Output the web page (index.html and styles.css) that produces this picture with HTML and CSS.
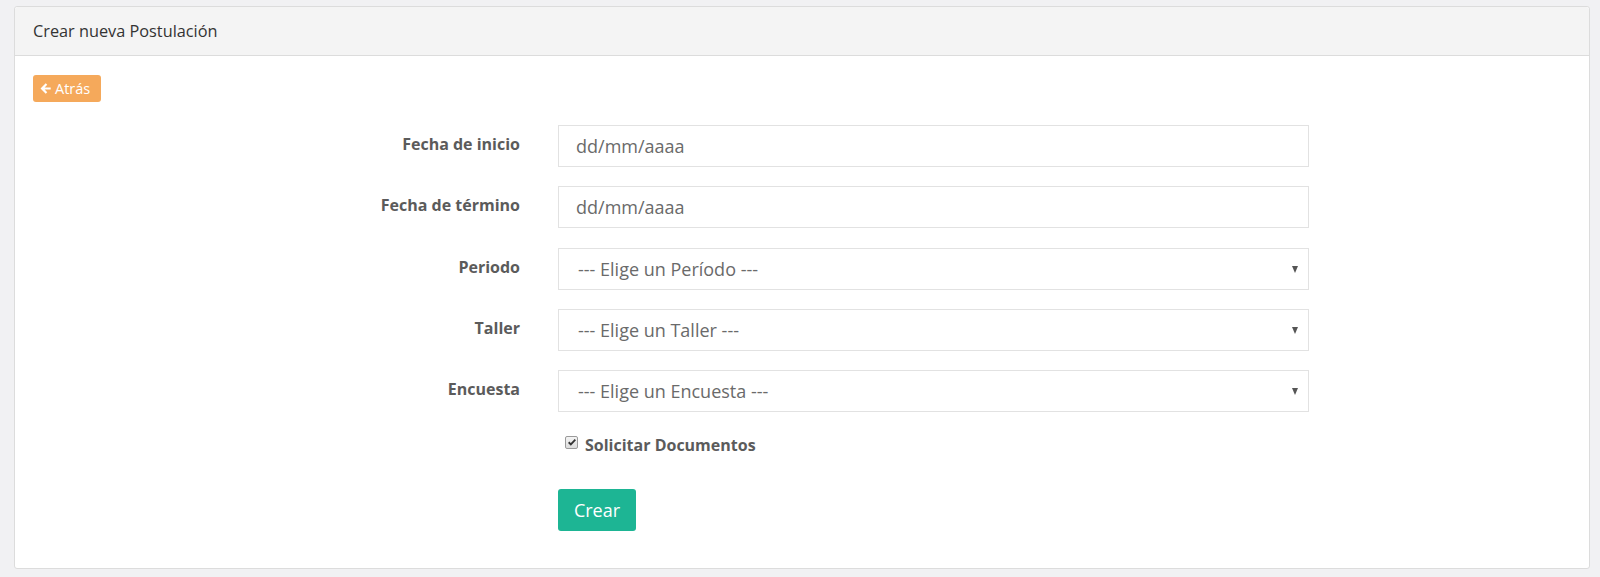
FILE: index.html
```html
<!DOCTYPE html>
<html lang="es">
<head>
<meta charset="utf-8">
<title>Crear nueva Postulación</title>
<link rel="stylesheet" href="styles.css">
</head>
<body>
<div class="panel">
  <div class="panel-heading">Crear nueva Postulación</div>
  <div class="panel-body">
    <a class="btn-back" href="#"><svg class="arrow" viewBox="0 0 12 12" width="13" height="13"><path d="M6.2 1.2 L1.4 6 L6.2 10.8 L7.6 9.4 L5.2 7 H10.8 V5 H5.2 L7.6 2.6 Z" fill="#fff"/></svg>Atrás</a>
    <form class="form">
      <label class="lbl">Fecha de inicio</label>
      <input class="control" type="text" placeholder="dd/mm/aaaa">
      <label class="lbl">Fecha de término</label>
      <input class="control" type="text" placeholder="dd/mm/aaaa">
      <label class="lbl">Periodo</label>
      <div class="select-wrap"><select class="control select"><option>--- Elige un Período ---</option></select></div>
      <label class="lbl">Taller</label>
      <div class="select-wrap"><select class="control select"><option>--- Elige un Taller ---</option></select></div>
      <label class="lbl">Encuesta</label>
      <div class="select-wrap"><select class="control select"><option>--- Elige un Encuesta ---</option></select></div>
      <label class="check">
        <span class="box"><svg viewBox="0 0 12 12" width="10" height="10"><path d="M2 6.3 L4.6 8.8 L10 3.2" fill="none" stroke="#333" stroke-width="2.2"/></svg></span>
        Solicitar Documentos
      </label>
      <div class="actions"><button class="btn-create" type="button">Crear</button></div>
    </form>
  </div>
</div>
</body>
</html>
```

FILE: styles.css
```css
* { box-sizing: border-box; }
html, body { margin: 0; padding: 0; }
body {
  background: #f1f1f3;
  font-family: "Open Sans", "Liberation Sans", sans-serif;
  color: #555;
  height: 577px;
  overflow: hidden;
}
.panel {
  margin: 6px 10px 9px 14px;
  background: #fff;
  border: 1px solid #dcdcdc;
  border-radius: 3px;
}
.panel-heading {
  height: 49px;
  line-height: 48px;
  padding: 0 18px;
  background: #f4f4f4;
  border-bottom: 1px solid #dcdcdc;
  font-size: 16.3px;
  color: #333;
  border-radius: 3px 3px 0 0;
}
.panel-body {
  padding: 19px 18px 37px;
}
.btn-back {
  display: inline-flex;
  align-items: center;
  gap: 3px;
  height: 27px;
  width: 68px;
  padding: 0 0 0 6px;
  background: #f5a95b;
  color: #fff;
  border-radius: 3px;
  font-size: 14.5px;
  text-decoration: none;
}
.form {
  margin-top: 23px;
  display: grid;
  grid-template-columns: 487px 751px;
  column-gap: 38px;
  row-gap: 19.25px;
}
.lbl {
  text-align: right;
  font-weight: 700;
  font-size: 16px;
  color: #5b5b5b;
  padding-top: 8px;
  line-height: 22px;
}
.control {
  display: block;
  width: 100%;
  height: 42px;
  border: 1px solid #e2e2e2;
  border-radius: 0;
  background: #fff;
  padding: 0 17px;
  font-family: "Open Sans", "Liberation Sans", sans-serif;
  font-size: 18px;
  color: #6a6a6a;
  outline: none;
}
.control::placeholder { color: #6a6a6a; opacity: 1; }
.select-wrap { position: relative; }
.select { appearance: none; -webkit-appearance: none; padding-left: 19px; }
.select-wrap::after {
  content: "";
  position: absolute;
  right: 11px;
  top: 18px;
  border-left: 3.5px solid transparent;
  border-right: 3.5px solid transparent;
  border-top: 7px solid #555;
  pointer-events: none;
}
.check {
  grid-column: 2;
  display: flex;
  align-items: center;
  gap: 7px;
  padding-left: 7px;
  margin-top: 3px;
  font-weight: 700;
  font-size: 16px;
  color: #5b5b5b;
  line-height: 22px;
}
.box {
  width: 13px;
  height: 13px;
  border: 1px solid #9a9a9a;
  border-radius: 2px;
  background: linear-gradient(#f4f4f4, #dcdcdc);
  display: flex;
  align-items: center;
  justify-content: center;
  margin-top: -6px;
}
.actions { grid-column: 2; margin-top: 13px; }
.btn-create {
  height: 42px;
  width: 78px;
  border: none;
  border-radius: 3px;
  background: #1db594;
  color: #fff;
  font-family: "Open Sans", "Liberation Sans", sans-serif;
  font-size: 18px;
  padding: 0;
}
```
